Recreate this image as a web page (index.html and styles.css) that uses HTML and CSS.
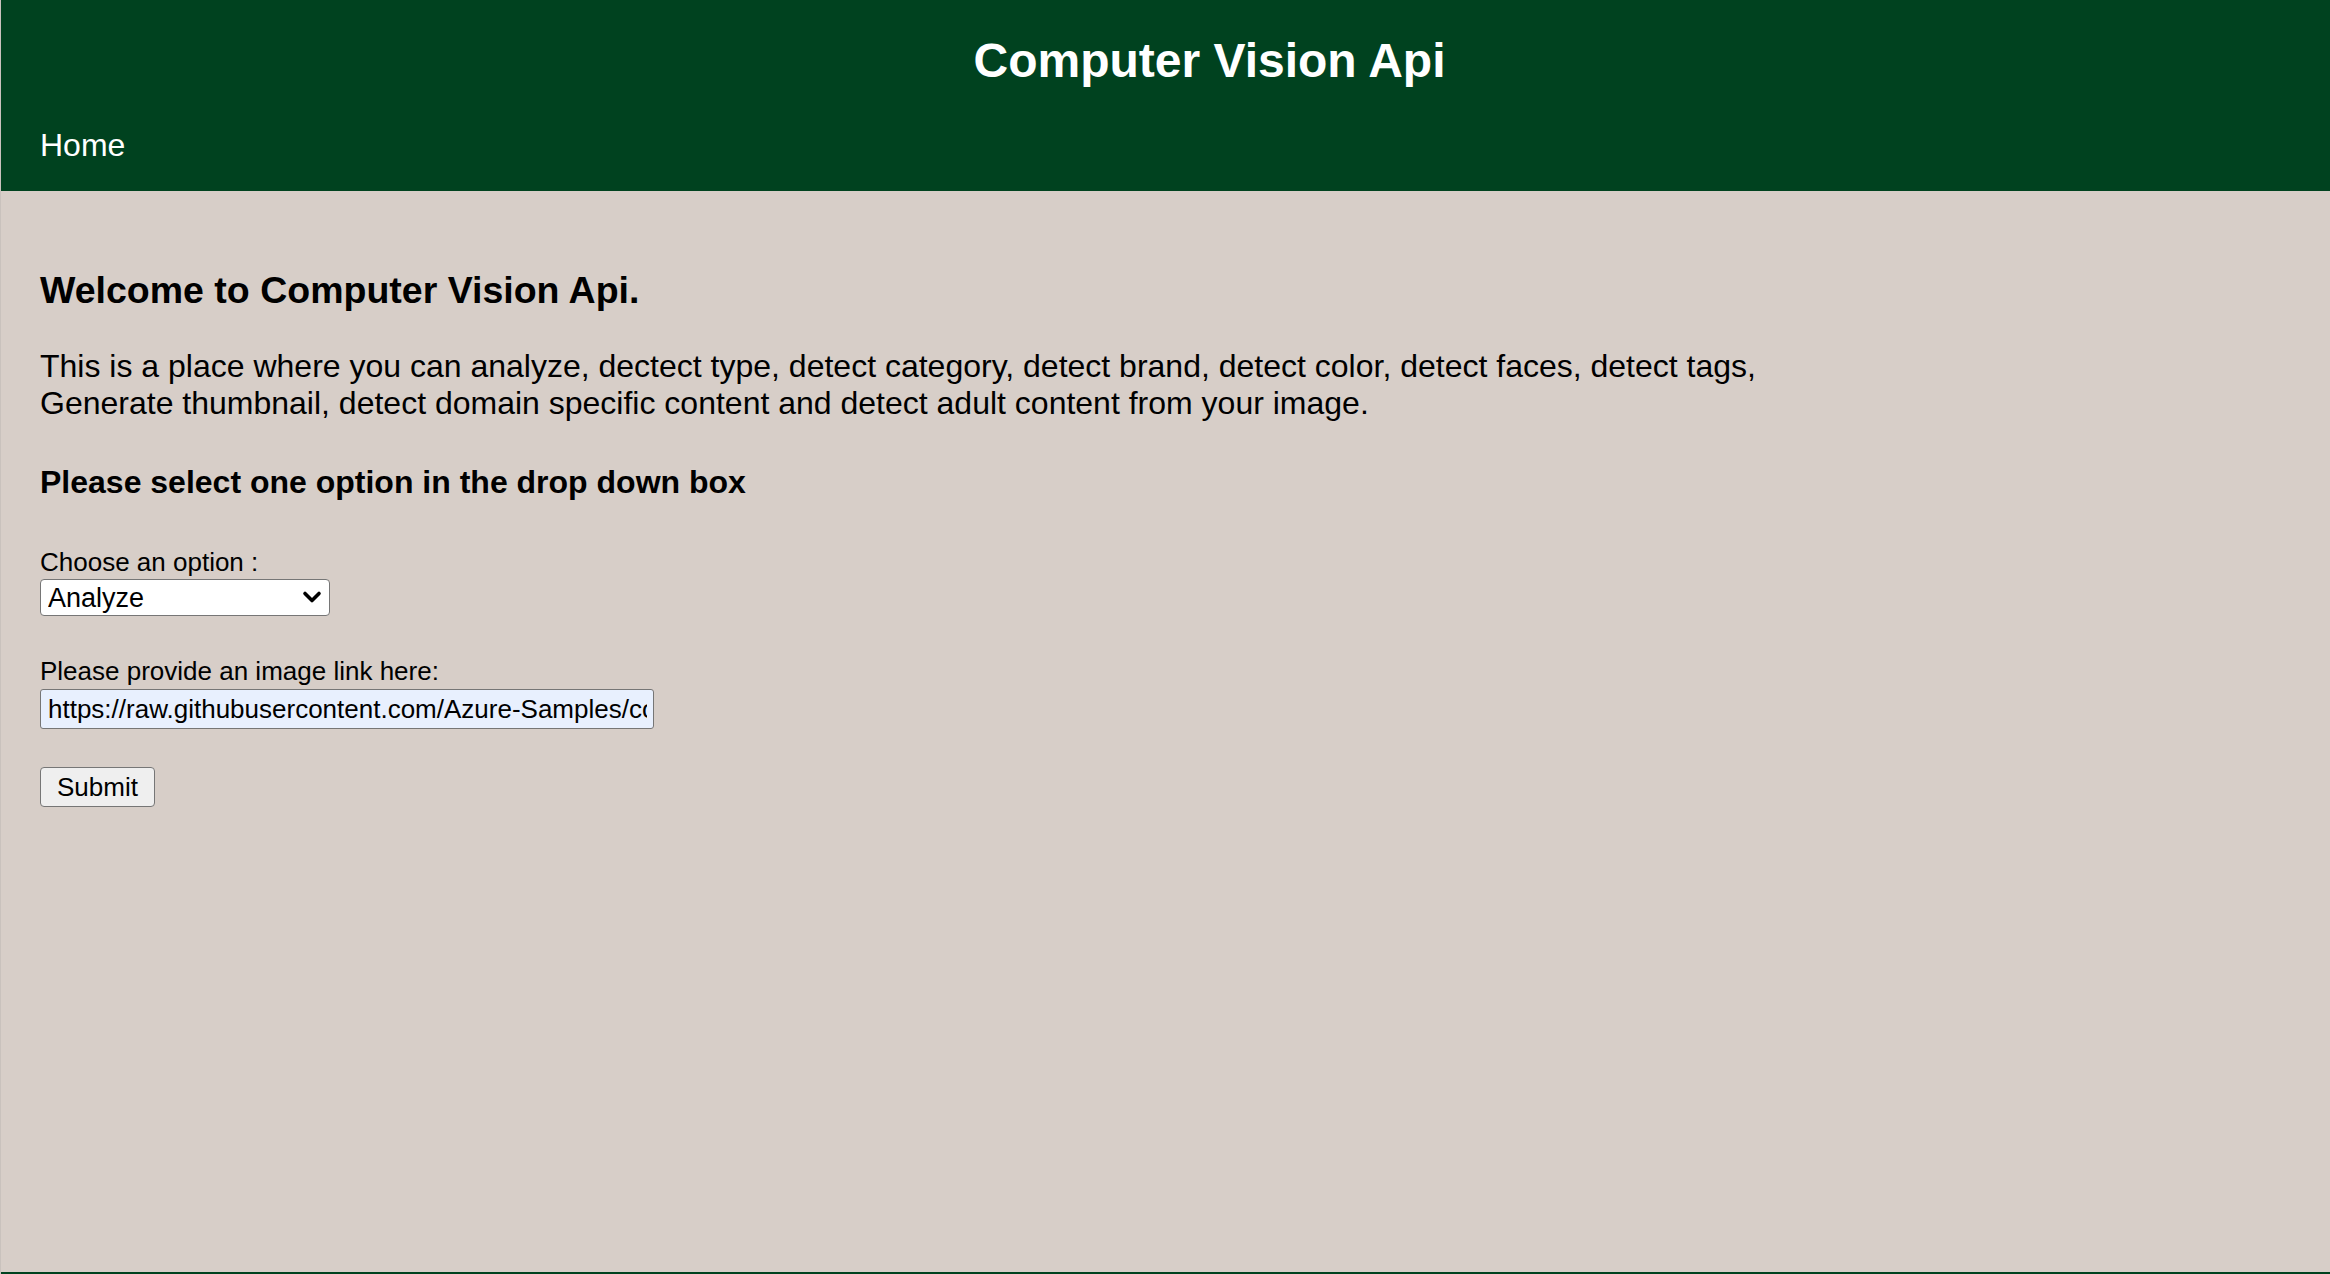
FILE: index.html
```html
<!DOCTYPE html>
<html lang="en">
<head>
<meta charset="utf-8">
<title>Computer Vision Api</title>
<link rel="stylesheet" href="styles.css">
</head>
<body>
<div class="page">
  <header class="site-header">
    <h1 class="site-title">Computer Vision Api</h1>
    <nav class="site-nav"><a class="nav-link" href="#">Home</a></nav>
  </header>
  <main class="content">
    <h2 class="welcome">Welcome to Computer Vision Api.</h2>
    <p class="intro">This is a place where you can analyze, dectect type, detect category, detect brand, detect color, detect faces, detect tags,<br>Generate thumbnail, detect domain specific content and detect adult content from your image.</p>
    <h3 class="prompt">Please select one option in the drop down box</h3>
    <form class="vision-form">
      <label class="field-label" for="option">Choose an option :</label>
      <div class="select-wrap">
        <select id="option" class="field-select">
          <option>Analyze</option>
          <option>Detect Type</option>
          <option>Detect Category</option>
        </select>
        <svg class="select-arrow" width="20" height="14" viewBox="0 0 20 14"><path d="M3 3.5 L10 10.5 L17 3.5" fill="none" stroke="#000" stroke-width="3.6" stroke-linecap="round" stroke-linejoin="round"/></svg>
      </div>
      <label class="field-label second" for="link">Please provide an image link here:</label>
      <input id="link" class="field-input" type="text" value="https://raw.githubusercontent.com/Azure-Samples/cognitive-services-sample-data-files/master/ComputerVision/Images/landmark.jpg">
      <button class="submit-btn" type="button">Submit</button>
    </form>
  </main>
  <footer class="site-footer"></footer>
</div>
</body>
</html>
```
FILE: styles.css
```css
html, body {
  margin: 0;
  padding: 0;
}
body {
  font-family: "Liberation Sans", Arial, Helvetica, sans-serif;
  color: #000;
  background: #d7cec8;
}
.page {
  min-height: 100vh;
  display: flex;
  flex-direction: column;
  border-left: 1px solid #c9c2bd;
  box-sizing: border-box;
}
.site-header {
  background: #00421f;
  color: #fff;
  padding: 33px 0 26px 0;
}
.site-title {
  margin: 0;
  padding-left: 88px;
  text-align: center;
  font-size: 48px;
  line-height: 56px;
  font-weight: bold;
}
.site-nav {
  margin-top: 36px;
  padding-left: 39px;
}
.nav-link {
  color: #fff;
  text-decoration: none;
  font-size: 32px;
  line-height: 40px;
}
.content {
  flex: 1;
  padding: 77px 39px 0 39px;
}
.welcome {
  margin: 0;
  font-size: 37.5px;
  line-height: 44px;
  font-weight: bold;
}
.intro {
  margin: 36px 0 0 0;
  font-size: 32px;
  line-height: 37px;
}
.prompt {
  margin: 43px 0 0 0;
  font-size: 32px;
  line-height: 34px;
  font-weight: bold;
}
.vision-form {
  display: flex;
  flex-direction: column;
  align-items: flex-start;
  margin-top: 49px;
}
.field-label {
  font-size: 26px;
  line-height: 28px;
}
.field-label.second {
  margin-top: 41px;
}
.select-wrap {
  position: relative;
  margin-top: 3px;
}
.field-select {
  appearance: none;
  -webkit-appearance: none;
  width: 290px;
  height: 37px;
  box-sizing: border-box;
  border: 1px solid #767676;
  border-radius: 4px;
  background: #fff;
  font-family: "Liberation Sans", Arial, sans-serif;
  font-size: 27px;
  padding: 0 30px 0 7px;
  color: #000;
}
.select-arrow {
  position: absolute;
  right: 8px;
  top: 11px;
  pointer-events: none;
}
.field-input {
  margin-top: 4px;
  width: 614px;
  height: 40px;
  box-sizing: border-box;
  border: 1px solid #767676;
  border-radius: 3px;
  background: #e8f0fe;
  font-family: "Liberation Sans", Arial, sans-serif;
  font-size: 26px;
  padding: 0 6px 0 7px;
  color: #000;
}
.submit-btn {
  margin-top: 38px;
  width: 115px;
  height: 40px;
  box-sizing: border-box;
  border: 1px solid #767676;
  border-radius: 4px;
  background: #efefef;
  font-family: "Liberation Sans", Arial, sans-serif;
  font-size: 26px;
  color: #000;
  padding: 0;
}
.site-footer {
  height: 2px;
  background: #00421f;
}
```
